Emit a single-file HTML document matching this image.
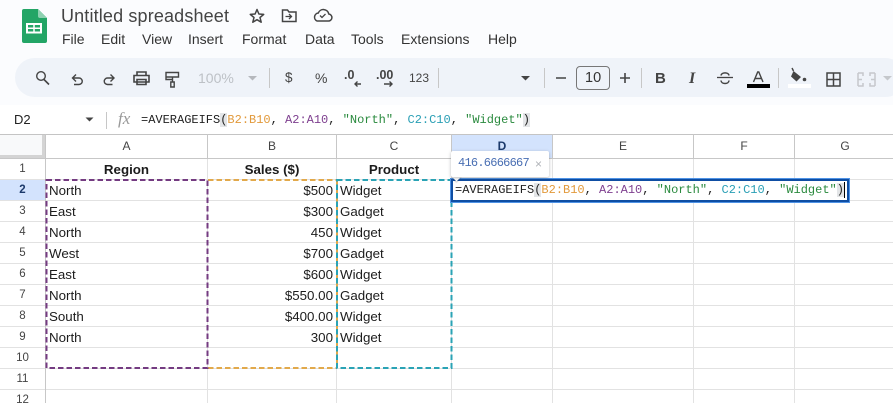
<!DOCTYPE html>
<html><head><meta charset="utf-8">
<style>
html,body{margin:0;padding:0}
body{width:893px;height:403px;overflow:hidden;position:relative;background:#fff;font-family:"Liberation Sans",sans-serif;color:#000}
.t{position:absolute;white-space:nowrap}
.m{font-family:"Liberation Mono",monospace;font-size:12px}
.c{position:absolute;font-size:13.33px;line-height:21px;height:21px;white-space:nowrap;color:#1c1c1c}
.r{text-align:right}
.h{position:absolute;top:134px;height:24px;line-height:25px;text-align:center;font-size:12px;color:#444}
.n{position:absolute;left:0;width:45px;height:21px;line-height:22px;text-align:center;font-size:11.5px;color:#444}
.b{position:absolute;text-align:center;font-weight:bold;font-size:13.33px;line-height:21px;top:159px;color:#1c1c1c}
.menu{position:absolute;top:30px;font-size:14px;line-height:18px;color:#333;white-space:nowrap}
.tb{position:absolute;top:68px;line-height:20px;font-size:13px;color:#444;white-space:nowrap}
svg{position:absolute;left:0;top:0;overflow:visible}
.o{color:#e29a3c}.p{color:#7e3f8f}.g{color:#2a8a3e}.b2{color:#2a9fb5}
</style></head><body>
<div style="position:absolute;left:0;top:0;width:893px;height:105px;background:#fbfcfe"></div>
<div style="position:absolute;left:15px;top:58px;width:890px;height:39px;border-radius:20px;background:#eff3f9"></div>
<div style="position:absolute;left:452px;top:134px;width:100px;height:24px;background:#d3e3fd"></div>
<div style="position:absolute;left:0;top:179px;width:45px;height:21px;background:#d3e3fd"></div>
<div style="position:absolute;left:0;top:134px;width:45px;height:24px;background:#f8f9fa"></div>

<svg width="893" height="403" viewBox="0 0 893 403">
 <!-- logo -->
 <path d="M24 9h14l9 9v23a2 2 0 0 1-2 2H24a2 2 0 0 1-2-2V11a2 2 0 0 1 2-2z" fill="#23a566"/>
 <path d="M38 9l9 9h-7a2 2 0 0 1-2-2z" fill="#8ed1b1"/>
 <path d="M27 24h14v8.500H27z" fill="none" stroke="#fff" stroke-width="2"/>
 <path d="M34 24v9M26 28.300h16" stroke="#fff" stroke-width="1.500"/>
 <!-- title icons -->
 <path d="M257 9.500l1.900 4.500 4.800.4-3.700 3.100 1.200 4.700-4.200-2.500-4.200 2.500 1.200-4.700-3.700-3.100 4.800-.4z" fill="none" stroke="#444" stroke-width="1.500" stroke-linejoin="round"/>
 <path d="M282.500 10h5l1.500 2h7v9.500h-13.500z" fill="none" stroke="#444" stroke-width="1.500"/>
 <path d="M285.500 16.500h6M289 14l2.500 2.500-2.500 2.500" fill="none" stroke="#444" stroke-width="1.300"/>
 <path d="M317 21h11a3.500 3.500 0 0 0 .8-7 5.500 5.500 0 0 0-10.500-1 4.200 4.200 0 0 0-1.300 8z" fill="none" stroke="#444" stroke-width="1.500"/>
 <path d="M320 15.500l2 2 3.500-3.500" fill="none" stroke="#444" stroke-width="1.300"/>
 <!-- toolbar icons -->
 <g fill="none" stroke="#444" stroke-width="1.400">
  <circle cx="41" cy="76" r="4.300"/><path d="M44 79.500l5 5" stroke-width="1.600"/>
  <path d="M76 74.500L72.500 78l3.500 3.500M73 78h6a3.250 3.250 0 0 1 0 6.500h-5"/>
  <path d="M110.500 74.500L114 78l-3.500 3.500M113.500 78h-6a3.250 3.250 0 0 0 0 6.500h5"/>
  <path d="M137 75v-3h9v3M134 75.500h15v6.500h-15zM137 79.500h9v5h-9z" stroke-width="1.600"/>
  <path d="M166 72.500h12.500v4.500h-12.500zM172.500 77v2.500h-6.500v-2M172.500 79.500v2.500M170.800 82h3.400v5h-3.400z"/>
 </g>
 <!-- separators -->
 <path d="M269.500 68v20M438.500 68v20M544.500 68v20M641.500 68v20M778.500 68v20" stroke="#c7c7c7" stroke-width="1"/>
 <path d="M106.500 112v17" stroke="#c7c7c7" stroke-width="1"/>
 <path d="M248 76h9l-4.500 4.500z" fill="#b5b8bd"/>
 <path d="M521 76h9l-4.500 4.500z" fill="#444"/>
 <path d="M85.500 117.500h8l-4 4z" fill="#444"/>
 <path d="M883 76h9l-4.500 4.500z" fill="#c5c8cc"/>
 <!-- .0 / .00 arrows -->
 <path d="M361 84h-6M357.500 81.500L355 84l2.500 2.500" fill="none" stroke="#444" stroke-width="1.400"/>
 <path d="M384 84h8M389.500 81.500L392 84l-2.500 2.500" fill="none" stroke="#444" stroke-width="1.400"/>
 <!-- size control -->
 <path d="M556 78h10M620 78h10M625 73v10" stroke="#444" stroke-width="1.600"/>
 <rect x="576.500" y="66.500" width="33" height="23" rx="3.500" fill="none" stroke="#777"/>
 <!-- format -->
 <path d="M717 77.500h16" stroke="#444" stroke-width="1.300"/>
 <path d="M729 75.500c-.3-3.500-7.500-3.500-8 0M721 80.500c.3 4 7.800 4 8 0" fill="none" stroke="#444" stroke-width="1.500"/>
 <rect x="747" y="84" width="23" height="4" fill="#000"/>
 <path d="M753.500 82l4.200-10h1.100l4.200 10M755 78.500h6.500" fill="none" stroke="#444" stroke-width="1.400"/>
 <rect x="788" y="84" width="23" height="4" fill="#fff"/>
 <path d="M793.500 71l7.500 6-4.500 4.500-5.500-5z" fill="#444"/>
 <path d="M793.500 71l-1.500-3" stroke="#444" stroke-width="1.400"/>
 <circle cx="804.500" cy="79.500" r="1.800" fill="#444"/>
 <path d="M827 73h13v13h-13zM833.500 73v13M827 79.500h13" fill="none" stroke="#444" stroke-width="1.500"/>
 <g fill="none" stroke="#c5c8cc" stroke-width="1.500">
  <path d="M858 73h5v3M875 73h-5v3M858 86h5v-3M875 86h-5v-3M858 73v13M875 73v13M858 79.500h4M875 79.500h-4"/>
 </g>
 <!-- formula bar bottom -->
 <rect x="0" y="134" width="893" height="1" fill="#c4c4c4"/>
 <rect x="0" y="158" width="893" height="1" fill="#c7c7c7"/>
 <!-- corner -->
 <rect x="42" y="135" width="3" height="23" fill="#d4d4d4"/>
 <rect x="0" y="155" width="45" height="3" fill="#d4d4d4"/>
 <!-- grid -->
 <g stroke="#e2e2e2" stroke-width="1">
  <path d="M0 179.500H893M0 200.500H893M0 221.500H893M0 242.500H893M0 263.500H893M0 284.500H893M0 305.500H893M0 326.500H893M0 347.500H893M0 368.500H893M0 389.500H893"/>
  <path d="M207.500 159V403M336.500 159V403M451.500 159V403M552.500 159V403M693.500 159V403M794.500 159V403M45.500 159V403"/>
 </g>
 <g stroke="#c7c7c7" stroke-width="1">
  <path d="M45.500 134V403M207.500 134V158M336.500 134V158M451.500 134V158M552.500 134V158M693.500 134V158M794.500 134V158"/>
 </g>
 <!-- dashed ranges -->
 <g fill="none" stroke-width="2" stroke-dasharray="5.500 3">
  <path d="M208 180H337" stroke="#e2a94b"/>
  <path d="M208 368H337" stroke="#e2a94b"/>
  <path d="M337 180V368" stroke="#e2a94b"/>
  <path d="M337 180H451.500V368H337Z" stroke="#2aa3b5"/>
  <path d="M46.500 180H207.500V368H46.500Z" stroke="#743b81"/>
 </g>
</svg>

<div class="t" style="left:61px;top:5px;font-size:18px;line-height:22px;color:#444;letter-spacing:.15px">Untitled spreadsheet</div>
<div class="menu" style="left:62px">File</div>
<div class="menu" style="left:101px">Edit</div>
<div class="menu" style="left:142px">View</div>
<div class="menu" style="left:188px">Insert</div>
<div class="menu" style="left:242px">Format</div>
<div class="menu" style="left:305px">Data</div>
<div class="menu" style="left:351px">Tools</div>
<div class="menu" style="left:401px">Extensions</div>
<div class="menu" style="left:488px">Help</div>

<div class="tb" style="left:198px;color:#bdc1c6;font-size:14px">100%</div>
<div class="tb" style="left:285px;font-size:13.500px">$</div>
<div class="tb" style="left:315px;font-size:14px">%</div>
<div class="tb" style="left:344px;font-weight:bold;top:65px;font-size:12.500px">.0</div>
<div class="tb" style="left:376px;font-weight:bold;top:65px;font-size:12.500px">.00</div>
<div class="tb" style="left:409px;font-size:12px">123</div>
<div class="tb" style="left:585px;font-size:14.500px;color:#333">10</div>
<div class="tb" style="left:655px;top:69px;font-weight:bold;font-size:15px;color:#444">B</div>
<div class="tb" style="left:689px;top:69px;font-style:italic;font-weight:bold;font-size:16px;font-family:'Liberation Serif',serif">I</div>

<div class="t" style="left:14px;top:111px;font-size:13px;line-height:18px;color:#222">D2</div>
<div class="t" style="left:118px;top:109px;font-size:17px;line-height:20px;font-style:italic;font-family:'Liberation Serif',serif;color:#999">fx</div>
<div class="t m" style="left:141px;top:112px;line-height:16px;color:#222">=AVERAGEIFS<span style="background:#e3e5e7">(</span><span class="o">B2:B10</span>, <span class="p">A2:A10</span>, <span class="g">"North"</span>, <span class="b2">C2:C10</span>, <span class="g">"Widget"</span><span style="background:#e3e5e7">)</span></div>

<div class="h" style="left:46px;width:161px">A</div>
<div class="h" style="left:208px;width:128px">B</div>
<div class="h" style="left:337px;width:114px">C</div>
<div class="h" style="left:452px;width:100px;color:#1c3a6b;font-weight:bold">D</div>
<div class="h" style="left:553px;width:140px">E</div>
<div class="h" style="left:694px;width:100px">F</div>
<div class="h" style="left:795px;width:100px">G</div>

<div class="n" style="top:158px">1</div>
<div class="n" style="top:179px;font-weight:bold;color:#1c3a6b">2</div>
<div class="n" style="top:200px">3</div>
<div class="n" style="top:221px">4</div>
<div class="n" style="top:242px">5</div>
<div class="n" style="top:263px">6</div>
<div class="n" style="top:284px">7</div>
<div class="n" style="top:305px">8</div>
<div class="n" style="top:326px">9</div>
<div class="n" style="top:347px">10</div>
<div class="n" style="top:368px">11</div>
<div class="n" style="top:389px">12</div>

<div class="b" style="left:46px;width:161px">Region</div>
<div class="b" style="left:208px;width:128px">Sales ($)</div>
<div class="b" style="left:337px;width:114px">Product</div>

<div class="c" style="left:49px;top:180px">North</div>
<div class="c" style="left:49px;top:201px">East</div>
<div class="c" style="left:49px;top:222px">North</div>
<div class="c" style="left:49px;top:243px">West</div>
<div class="c" style="left:49px;top:264px">East</div>
<div class="c" style="left:49px;top:285px">North</div>
<div class="c" style="left:49px;top:306px">South</div>
<div class="c" style="left:49px;top:327px">North</div>

<div class="c r" style="left:208px;width:125px;top:180px">$500</div>
<div class="c r" style="left:208px;width:125px;top:201px">$300</div>
<div class="c r" style="left:208px;width:125px;top:222px">450</div>
<div class="c r" style="left:208px;width:125px;top:243px">$700</div>
<div class="c r" style="left:208px;width:125px;top:264px">$600</div>
<div class="c r" style="left:208px;width:125px;top:285px">$550.00</div>
<div class="c r" style="left:208px;width:125px;top:306px">$400.00</div>
<div class="c r" style="left:208px;width:125px;top:327px">300</div>

<div class="c" style="left:340px;top:180px">Widget</div>
<div class="c" style="left:340px;top:201px">Gadget</div>
<div class="c" style="left:340px;top:222px">Widget</div>
<div class="c" style="left:340px;top:243px">Gadget</div>
<div class="c" style="left:340px;top:264px">Widget</div>
<div class="c" style="left:340px;top:285px">Gadget</div>
<div class="c" style="left:340px;top:306px">Widget</div>
<div class="c" style="left:340px;top:327px">Widget</div>

<!-- editor -->
<div style="position:absolute;left:450px;top:178px;width:399.500px;height:24.500px;box-sizing:border-box;border:1.500px solid #4f93e6;background:#0f4ea3;padding:2px"><div style="width:100%;height:100%;background:#fff"></div></div>
<div class="t m" style="left:455px;top:182px;line-height:16px;color:#222">=AVERAGEIFS<span style="background:#e3e5e7">(</span><span class="o">B2:B10</span>, <span class="p">A2:A10</span>, <span class="g">"North"</span>, <span class="b2">C2:C10</span>, <span class="g">"Widget"</span><span style="background:#e3e5e7">)</span></div>
<div style="position:absolute;left:844px;top:182px;width:1px;height:16px;background:#000"></div>

<!-- tooltip -->
<div style="position:absolute;left:453px;top:173px;width:7px;height:7px;background:#fff;transform:rotate(45deg);box-shadow:1px 1px 1px rgba(60,64,67,.25)"></div>
<div style="position:absolute;left:451px;top:151px;width:98px;height:26px;background:#fff;border-radius:2px;box-shadow:0 1px 3px rgba(60,64,67,.35)"></div>
<div class="t" style="left:458px;top:155px;font-family:'Liberation Mono',monospace;font-size:12px;letter-spacing:-.75px;line-height:16px;color:#4a6fb3">416.6666667</div>
<div class="t" style="left:535px;top:156px;font-size:12px;line-height:16px;color:#b0b3b8">×</div>
</body></html>
